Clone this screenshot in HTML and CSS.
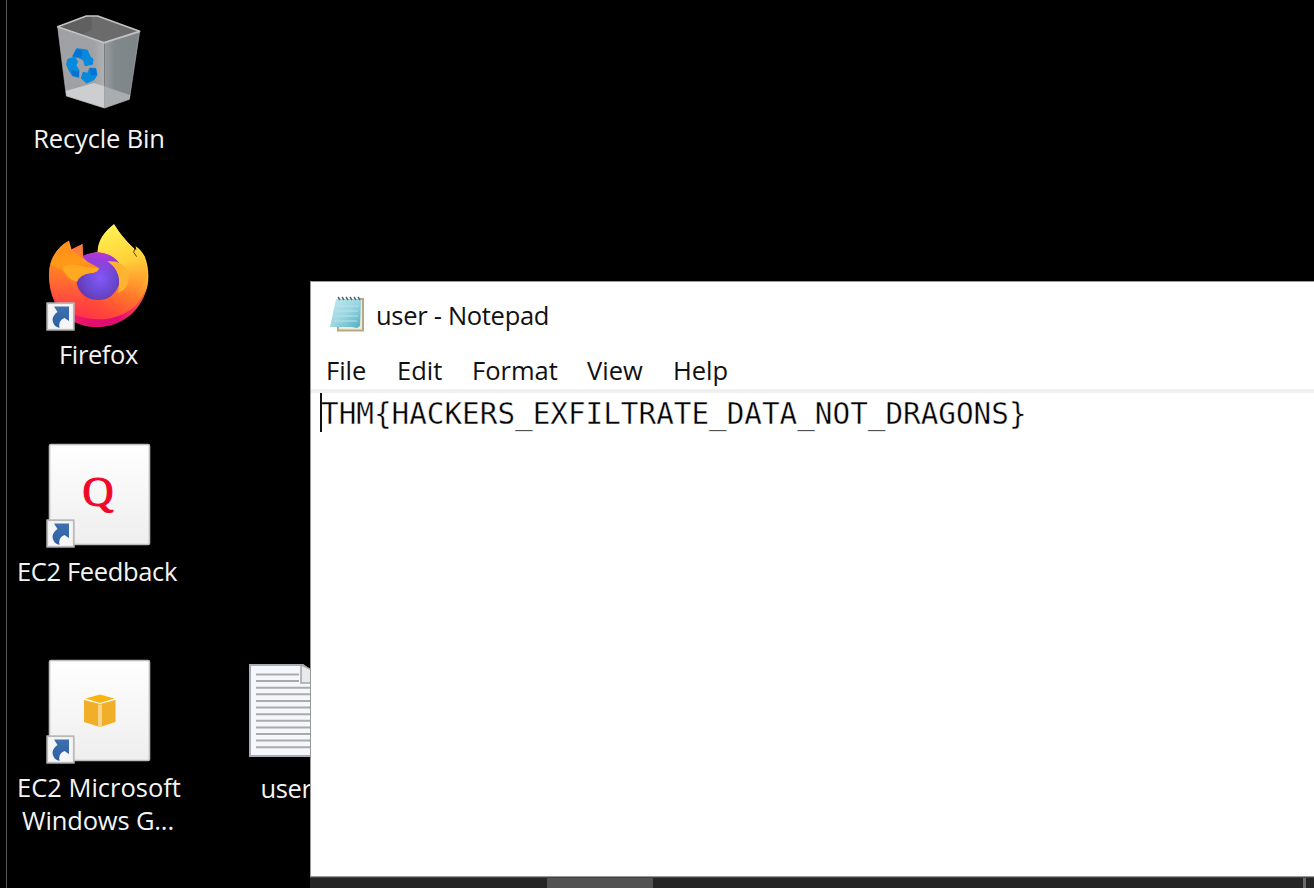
FILE: index.html
```html
<!DOCTYPE html>
<html lang="en">
<head>
<meta charset="utf-8">
<title>Desktop</title>
<link rel="stylesheet" href="styles.css">
</head>
<body>
<svg width="0" height="0" class="defs">
  <defs>
    <linearGradient id="tile" x1="0" y1="0" x2="0" y2="1"><stop offset="0" stop-color="#fff"/><stop offset="1" stop-color="#eeeeee"/></linearGradient>
    <linearGradient id="arrow" x1="0" y1="0" x2="0" y2="1"><stop offset="0" stop-color="#3f70b0"/><stop offset="1" stop-color="#2c60a2"/></linearGradient>
    <symbol id="shortcut" viewBox="0 0 29 29">
      <rect x="1.2" y="1.2" width="26.6" height="26.6" fill="#f5f5f5" stroke="#b9b9b9" stroke-width="1.8"/>
      <path d="M8 4.500H23V19L18.500 16Q12 18.500 13.500 26Q6.500 24 6.500 17.500Q7 13 11.500 10Z" fill="url(#arrow)"/>
    </symbol>
  </defs>
</svg>
<main class="desktop">
  <div class="edge"></div>

  <div class="item recycle">
    <svg class="art" viewBox="15 -6 318 318">
      <defs>
        <linearGradient id="binL"><stop offset="0" stop-color="#a0a1a5"/><stop offset=".75" stop-color="#a0a1a4"/><stop offset="1" stop-color="#b0b1b4"/></linearGradient>
        <linearGradient id="binR"><stop offset="0" stop-color="#979c9f"/><stop offset=".3" stop-color="#81888c"/><stop offset="1" stop-color="#7e8589"/></linearGradient>
      </defs>
      <path d="M53 50 193 98V294L79 258Z" fill="url(#binL)"/>
      <path d="M193 98 299 64 268 268 193 294Z" fill="url(#binR)"/>
      <path d="M77 243 162 219 193 229V294L79 258Z" fill="#cdced0"/>
      <path d="M193 229 271 256 268 268 193 294Z" fill="#a9adb0"/>
      <path d="M53 50 139 18H173L299 64 193 98Z" fill="#6b6b6b"/>
      <path d="M53 50 139 18H155V60L122 74Z" fill="#606060"/>
      <path d="M53 50 139 18H173L299 64 193 98Z" fill="none" stroke="#c4c4c5" stroke-width="5" stroke-linejoin="round"/>
      <path d="M53 50 79 258 193 294 268 268 299 64" fill="none" stroke="#b0b1b3" stroke-width="2"/>
      <path d="M110 116 142 120 150 140 159 147 157 163 135 167 131 151 119 144 98 139ZM83 148 104 141 113 155 108 166 117 181 116 202 97 197 87 180 80 164ZM149 175 167 175 171 194 162 209 140 219 124 205 129 187 143 190Z" fill="#078ade" stroke="#078ade" stroke-width="3" stroke-linejoin="round"/>
      <path d="M110 117 127 121 125 143 98 139ZM92 181 117 182V202L98 197ZM149 175 167 176 170 194 153 197Z" fill="#0872d3"/>
    </svg>
    <span class="label l-recycle">Recycle Bin</span>
  </div>

  <div class="item firefox">
    <svg class="art" viewBox="15 12 318 318">
      <defs>
        <linearGradient id="fx" x1=".8" y1=".1" x2=".35" y2="1"><stop offset="0" stop-color="#fff04a"/><stop offset=".3" stop-color="#ffb52f"/><stop offset=".52" stop-color="#ff792a"/><stop offset=".75" stop-color="#ff4a38"/><stop offset="1" stop-color="#ff2753"/></linearGradient>
        <linearGradient id="fxy" x1=".4" y1="0" x2=".6" y2="1"><stop offset="0" stop-color="#fff150"/><stop offset=".5" stop-color="#ffcf38"/><stop offset="1" stop-color="#ff6a2d" stop-opacity="0"/></linearGradient>
        <radialGradient id="globe" cx=".53" cy=".54" r=".58"><stop offset="0" stop-color="#8758f8"/><stop offset=".5" stop-color="#6b4bd6"/><stop offset="1" stop-color="#6533aa"/></radialGradient>
        <linearGradient id="globeTop" x1="0" y1="0" x2="0" y2="1"><stop offset="0" stop-color="#bb35df"/><stop offset=".5" stop-color="#9b45ee" stop-opacity="0"/></linearGradient>
        <linearGradient id="fox" x1="0" y1="0" x2=".2" y2="1"><stop offset="0" stop-color="#ff8b1c"/><stop offset=".55" stop-color="#ff9a17"/><stop offset="1" stop-color="#ff6931"/></linearGradient>
        <linearGradient id="flank" x1="0" y1="0" x2="0" y2="1"><stop offset="0" stop-color="#ff8720"/><stop offset=".55" stop-color="#ff563b"/><stop offset="1" stop-color="#ff344c" stop-opacity="0"/></linearGradient>
        <linearGradient id="pink"><stop offset="0" stop-color="#ff2850"/><stop offset=".4" stop-color="#e1106f"/><stop offset=".7" stop-color="#df0a75"/><stop offset="1" stop-color="#ff5b45"/></linearGradient>
      </defs>
      <path d="M87 62Q45 84 31 132C20 177 33 241 65 281Q109 320 172 321C242 321 307 269 323 196Q330 150 314 109Q302 88 287 79L290 92C265 73 238 39 222 13C192 36 174 63 173 96Q148 100 129 111L127 72 96 94Z" fill="url(#fx)"/>
      <path d="M222 13C192 36 174 63 173 96Q218 101 247 145Q270 196 222 249Q304 234 321 164Q323 118 287 79L290 92C265 73 238 39 222 13Z" fill="url(#fxy)"/>
      <path d="M31 132C20 177 33 241 65 281Q104 307 146 296L115 185 60 144Z" fill="url(#flank)"/>
      <path d="M39 230Q81 294 173 298C250 299 303 256 319 204C302 280 237 321 172 321Q79 320 39 230Z" fill="url(#pink)"/>
      <path d="M121 113C157 87 210 94 235 127 252 177 234 224 195 238 153 247 116 226 110 188Z" fill="url(#globe)"/>
      <path d="M121 113C157 87 210 94 235 127 252 177 234 224 195 238 153 247 116 226 110 188Z" fill="url(#globeTop)"/>
      <path d="M202 124Q247 120 263 153C272 190 258 211 234 218 243 180 237 147 202 124Z" fill="#ffb431"/>
      <path d="M90 90 127 72 129 111 148 133 106 126Z" fill="#ff7b3d"/>
      <path d="M87 62Q45 84 31 132L65 151Q82 181 108 204C104 178 119 160 155 159Q176 157 177 144L143 125Q115 107 99 91L90 97Z" fill="url(#fox)"/>
      <path d="M68 142Q80 132 107 135Q142 143 177 145Q173 159 150 160 121 163 111 186Q77 176 68 142Z" fill="#ffa921"/>
      <path d="M286 80 281 97 290 110" fill="none" stroke="#2b2005" stroke-width="2.500"/>
    </svg>
    <svg class="badge"><use href="#shortcut"/></svg>
    <span class="label l-firefox">Firefox</span>
  </div>

  <div class="item feedback">
    <svg class="art" viewBox="0 0 106 106">
      <rect x="3.500" y="3.500" width="100" height="100" rx="1.500" fill="url(#tile)" stroke="#bdbdbd" stroke-width="1.600"/>
      <text class="quora" x="36.500" y="64.500">Q</text>
    </svg>
    <svg class="badge"><use href="#shortcut"/></svg>
    <span class="label l-feedback">EC2 Feedback</span>
  </div>

  <div class="item guide">
    <svg class="art" viewBox="0 0 106 106">
      <rect x="3.500" y="3.500" width="100" height="100" rx="1.500" fill="url(#tile)" stroke="#bdbdbd" stroke-width="1.600"/>
      <path d="M38 43 54 47V70L38 65ZM54 47 69.500 43V65L54 70Z" fill="#f0ae29"/>
      <path d="M39.500 41.500 54 37.500 68.500 41.500 54 46Z" fill="#fbb40f"/>
      <path d="M52 47.500H56V69.500L54 70 52 69.500Z" fill="#f8d48b"/>
    </svg>
    <svg class="badge"><use href="#shortcut"/></svg>
    <span class="label l-guide">EC2 Microsoft</span>
    <span class="label l-guide2">Windows G...</span>
  </div>

  <div class="item textfile">
    <svg class="doc" viewBox="0 0 76 94">
      <path d="M1 1H54L75 18V92H1Z" fill="#f4f8fd" stroke="#a9acb0" stroke-width="2"/>
      <path d="M52 1V19H75L61 5 55 2Z" fill="#e9eaec" stroke="#a2a4a7" stroke-width="1.500"/>
      <path d="M7 10.500H50M7 17H50M7 23.700H70M7 30.300H70M7 37H70M7 43.500H70M7 50.200H70M7 56.700H70M7 63.400H70M7 70H70M7 76.600H70M7 83.300H70" stroke="#a9aaac" stroke-width="2"/>
    </svg>
    <span class="label l-user">user</span>
  </div>

  <section class="window">
    <header class="titlebar">
      <svg class="notepad" viewBox="0 0 36 38">
        <defs><linearGradient id="pad" x1="0" y1="0" x2="1" y2="1"><stop offset="0" stop-color="#c5eaf0"/><stop offset=".5" stop-color="#9bd6e1"/><stop offset="1" stop-color="#4cafc3"/></linearGradient></defs>
        <path d="M31 4H34V35.500H9V32" fill="#efe9d5" stroke="#b6aa84" stroke-width="2"/>
        <path d="M7 4H32L31 31 28 33 23 32H1Z" fill="url(#pad)"/>
        <path d="M8 11H30M7 16H29M6 21H29M5 26H28" stroke="#b7e3ea" stroke-width="1"/>
        <path d="M9 2 11 5M13 2 15 5M17 2 19 5M21 2 23 5M25 2 27 5M29 2 31 5" fill="none" stroke="#526970" stroke-width="1.500"/>
      </svg>
      <span class="title">user - Notepad</span>
    </header>
    <nav class="menu"><span class="m-file">File</span><span class="m-edit">Edit</span><span class="m-format">Format</span><span class="m-view">View</span><span class="m-help">Help</span></nav>
    <div class="editor"><i class="caret"></i><span class="flag">THM{HACKERS_EXFILTRATE_DATA_NOT_DRAGONS}</span></div>
  </section>
  <footer class="taskbar"><i class="active"></i><i class="peek"></i></footer>
</main>
</body>
</html>
```
FILE: styles.css
```css
* { box-sizing: border-box; }
body { margin: 0; background: #000; font-family: "Open Sans", "Noto Sans", sans-serif; }
.defs { position: absolute; }
.desktop { position: relative; width: 1314px; height: 888px; overflow: hidden; background: #000; }
.edge { position: absolute; left: 6px; top: 0; width: 1px; height: 888px; background: #555; }

.item { position: absolute; left: 0; width: 198px; color: #f4f4f4; display: flex; flex-direction: column; align-items: center; }
.recycle { top: 8px; }
.firefox { top: 224px; }
.feedback { top: 441px; }
.guide { top: 657px; }
.textfile { left: 185px; top: 664px; }
.art { width: 106px; height: 106px; display: block; flex: none; margin-left: -1px; }
.firefox .art, .recycle .art { margin-left: -2px; }
.doc { width: 76px; height: 94px; display: block; margin: 0 0 6px 5px; }
.badge { position: absolute; left: 45.500px; top: 78px; width: 29px; height: 29px; }
.label { font-size: 25.500px; line-height: 33px; white-space: nowrap; margin-top: 8px; }
.l-recycle { letter-spacing: -.15px; }
.l-firefox { letter-spacing: -.4px; margin-left: -1px; }
.l-feedback { letter-spacing: -.35px; margin-left: -4px; }
.l-guide2 { margin-top: 0; letter-spacing: -.15px; margin-left: -2px; }
.l-user { padding-left: 4px; letter-spacing: -.4px; }
.quora { font-family: "Liberation Serif", serif; font-size: 43px; fill: #f0082b; stroke: #f0082b; stroke-width: 1.200px; }

.window { position: absolute; left: 310px; top: 281px; width: 1004px; height: 596px; background: #fff; border: 1px solid #999; border-right: 0; display: flex; flex-direction: column; color: #111; font-size: 25.500px; }
.titlebar { height: 66px; display: flex; align-items: center; padding-left: 18px; }
.notepad { width: 36px; height: 38px; margin-top: -3px; }
.title { margin-left: 11px; line-height: 34px; white-space: nowrap; letter-spacing: -.3px; }
.menu { height: 45px; border-bottom: 4px solid #f0f0f0; line-height: 44px; display: flex; white-space: nowrap; padding-left: 15px; }
.m-file { width: 71px; }
.m-edit { width: 75px; }
.m-format { width: 115px; }
.m-view { width: 86px; }
.editor { flex: 1; position: relative; padding-left: 10px; }
.caret { position: absolute; left: 9px; top: 0; width: 2px; height: 39px; background: #111; }
.flag { font-family: "DejaVu Sans Mono", monospace; font-size: 29.300px; line-height: 42px; -webkit-text-stroke: .4px #fff; color: #000; white-space: nowrap; }

.taskbar { position: absolute; left: 310px; top: 877px; width: 1004px; height: 11px; background: #252525; border-top: 1px solid #444; display: flex; }
.active { margin-left: 237px; width: 106px; background: #525252; }
.peek { margin-left: 650px; width: 3px; background: #6a6a6a; }
```
